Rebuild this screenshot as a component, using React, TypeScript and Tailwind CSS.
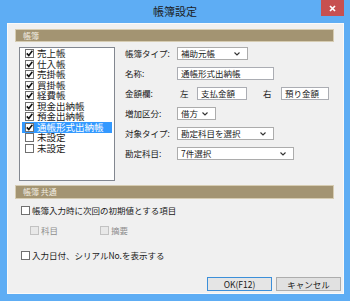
import type { ReactNode } from 'react';

const LEDGERS = [
  { name: '売上帳', checked: true },
  { name: '仕入帳', checked: true },
  { name: '売掛帳', checked: true },
  { name: '買掛帳', checked: true },
  { name: '経費帳', checked: true },
  { name: '現金出納帳', checked: true },
  { name: '預金出納帳', checked: true },
  { name: '通帳形式出納帳', checked: true, selected: true },
  { name: '未設定', checked: false },
  { name: '未設定', checked: false },
];

function CheckBox({ checked, disabled }: { checked?: boolean; disabled?: boolean }) {
  return (
    <span
      className={`flex h-[9px] w-[9px] shrink-0 items-center justify-center border ${
        disabled ? 'border-[#c2c2c2] bg-[#e8e8e8]' : 'border-[#707070] bg-white'
      }`}
    >
      {checked && (
        <svg width="7" height="7" viewBox="0 0 7 7">
          <path d="M0.8 3.4 L2.8 5.6 L6.4 0.8" fill="none" stroke="#111" strokeWidth="1.6" />
        </svg>
      )}
    </span>
  );
}

function Arrow() {
  return (
    <svg width="6" height="4" viewBox="0 0 6 4" className="shrink-0">
      <path d="M0.5 0.5 L3 3 L5.5 0.5" fill="none" stroke="#333" strokeWidth="1.1" />
    </svg>
  );
}

function Select({ value, width }: { value: string; width: string }) {
  return (
    <div
      className={`flex h-[13px] items-center justify-between border border-[#acacac] bg-white pl-[3px] pr-[7px] ${width}`}
    >
      <span className="leading-none">{value}</span>
      <Arrow />
    </div>
  );
}

function Field({ value, width }: { value: string; width: string }) {
  return (
    <div className={`flex h-[13px] items-center border border-[#abadb3] bg-white pl-[3px] ${width}`}>
      <span className="leading-none">{value}</span>
    </div>
  );
}

function Row({ label, children }: { label: string; children: ReactNode }) {
  return (
    <div className="flex h-[13px] items-center">
      <span className="w-[52px] shrink-0 leading-none">{label}</span>
      {children}
    </div>
  );
}

function SectionHeader({ title, height }: { title: string; height: string }) {
  return (
    <div
      className={`ml-[7px] mr-[9px] flex items-center border border-[#d6ccb2] bg-[#a39472] pl-[7px] text-[8px] text-[#f1ece0] ${height}`}
    >
      <span className="leading-none">{title}</span>
    </div>
  );
}

export default function App() {
  return (
    <div className="flex h-[301px] w-[350px] flex-col bg-[#5eadf4] font-['Noto_Sans_CJK_JP',sans-serif] text-[8.5px] text-[#1a1a1a]">
      <div className="relative flex h-[23px] shrink-0 items-center justify-center">
        <span className="text-[11px] leading-none text-[#1c1c1c]">帳簿設定</span>
        <div className="absolute right-[6px] top-0 flex h-[16px] w-[23px] items-center justify-center bg-[#c75050]">
          <svg width="7" height="7" viewBox="0 0 7 7">
            <path d="M1 1 L6 6 M6 1 L1 6" stroke="#fff" strokeWidth="1.7" />
          </svg>
        </div>
      </div>

      <div className="mb-[7px] ml-[7px] mr-[6px] flex flex-1 flex-col border border-[#fafafa] bg-[#f0f0f0]">
        <div className="mt-[5px]">
          <SectionHeader title="帳簿" height="h-[13px]" />
        </div>

        <div className="ml-[11px] mt-[5px] flex">
          <div className="h-[134px] w-[96px] border border-[#828790] bg-white pt-[0.5px] text-[9.5px]">
            {LEDGERS.map((item, i) => (
              <div
                key={i}
                className={`ml-[2px] flex h-[10.5px] w-[90px] items-center gap-[3px] pl-[3px] ${
                  item.selected ? 'bg-[#3399ff] text-white' : ''
                }`}
              >
                <CheckBox checked={item.checked} />
                <span className="whitespace-nowrap leading-none">{item.name}</span>
              </div>
            ))}
          </div>

          <div className="ml-[10px] flex flex-col gap-[7px]">
            <Row label="帳簿タイプ:">
              <Select value="補助元帳" width="w-[71px]" />
            </Row>
            <Row label="名称:">
              <Field value="通帳形式出納帳" width="w-[97px]" />
            </Row>
            <Row label="金額欄:">
              <span className="ml-[3px] w-[17px] leading-none">左</span>
              <Field value="支払金額" width="w-[50px]" />
              <span className="ml-[16px] w-[18px] leading-none">右</span>
              <Field value="預り金額" width="w-[48px]" />
            </Row>
            <Row label="増加区分:">
              <Select value="借方" width="w-[39px]" />
            </Row>
            <Row label="対象タイプ:">
              <Select value="勘定科目を選択" width="w-[97px]" />
            </Row>
            <Row label="勘定科目:">
              <Select value="7件選択" width="w-[117px]" />
            </Row>
          </div>
        </div>

        <div className="mt-[4px]">
          <SectionHeader title="帳簿  共通" height="h-[14px]" />
        </div>

        <div className="ml-[13px] mt-[5px] flex h-[13px] items-center gap-[2px]">
          <CheckBox />
          <span className="leading-none">帳簿入力時に次回の初期値とする項目</span>
        </div>

        <div className="ml-[22px] mt-[7px] flex h-[13px] items-center text-[#8e8e8e]">
          <div className="flex w-[70px] items-center gap-[2px]">
            <CheckBox disabled />
            <span className="leading-none">科目</span>
          </div>
          <div className="flex items-center gap-[2px]">
            <CheckBox disabled />
            <span className="leading-none">摘要</span>
          </div>
        </div>

        <div className="ml-[13px] mt-[12px] flex h-[13px] items-center gap-[2px]">
          <CheckBox />
          <span className="leading-none">入力日付、シリアルNo.を表示する</span>
        </div>

        <div className="mr-[2px] mt-[15px] flex justify-end gap-[4px]">
          <button className="flex h-[14px] w-[65px] items-center justify-center border border-[#3c8fd9] bg-[#e5e5e5] text-[8.5px] leading-none">
            OK(F12)
          </button>
          <button className="flex h-[14px] w-[65px] items-center justify-center border border-[#adadad] bg-[#e1e1e1] text-[8.5px] leading-none">
            キャンセル
          </button>
        </div>
      </div>
    </div>
  );
}
